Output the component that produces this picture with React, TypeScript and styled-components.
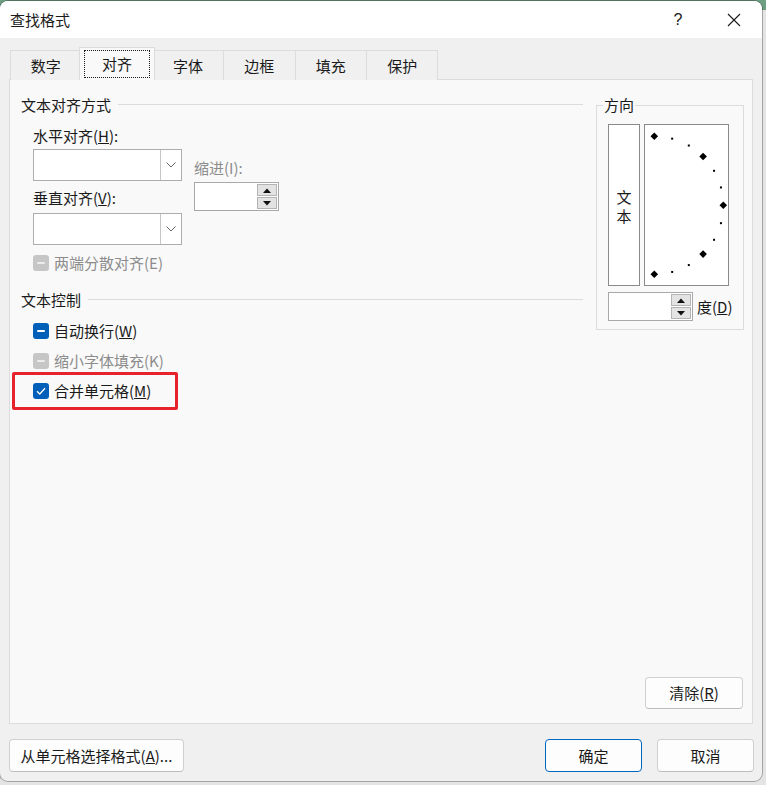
import React from "react";
import styled, { createGlobalStyle, css } from "styled-components";

const FONT = `"Noto Sans CJK SC", "Microsoft YaHei", "Noto Sans", sans-serif`;

const GlobalStyle = createGlobalStyle`
  html, body { margin: 0; padding: 0; }
  body {
    width: 766px;
    height: 785px;
    overflow: hidden;
    background: linear-gradient(#6f9f82 0, #6f9f82 10px, #e4e4e4 10px);
    font-family: ${FONT};
    color: #1a1a1a;
  }
  * { box-sizing: border-box; }
`;

const Dialog = styled.div`
  width: 762px;
  height: 780px;
  margin-top: 1px;
  border-radius: 8px;
  overflow: hidden;
  background: #f0f0f0;
  box-shadow: 0 0 0 1px rgba(0, 0, 0, 0.28);
  display: flex;
  flex-direction: column;
`;

const TitleBar = styled.div`
  height: 37px;
  flex: none;
  background: #ffffff;
  display: flex;
  align-items: center;
  padding-left: 10px;
`;

const Title = styled.div`
  font-size: 15px;
  line-height: 20px;
  flex: 1;
`;

const CaptionButton = styled.div`
  width: 56px;
  height: 37px;
  display: flex;
  align-items: center;
  justify-content: center;
  font-family: "Liberation Sans", sans-serif;
  font-size: 16px;
  color: #1a1a1a;
`;

const TabRow = styled.div`
  display: flex;
  align-items: flex-end;
  height: 32px;
  margin-top: 10px;
  padding-left: 10px;
  position: relative;
  z-index: 2;
  margin-bottom: -1px;
`;

const Tab = styled.div<{ $active?: boolean }>`
  width: 71.4px;
  height: 30px;
  display: flex;
  align-items: center;
  justify-content: center;
  font-size: 15px;
  line-height: 20px;
  background: #f0f0f0;
  border: 1px solid #dcdcdc;
  border-bottom: none;
  border-left: none;
  &:first-child { border-left: 1px solid #dcdcdc; }
  ${(p) =>
    p.$active &&
    css`
      width: 75.4px;
      height: 33px;
      margin: 0 -2px 0 -2px;
      border-left: 1px solid #dcdcdc;
      background: #f9f9f9;
      position: relative;
      z-index: 3;
      padding-bottom: 1px;
    `}
`;

const FocusText = styled.span`
  display: inline-flex;
  align-items: center;
  justify-content: center;
  width: 64px;
  height: 26px;
  outline: 1px dotted #1a1a1a;
  outline-offset: 0;
`;

const Panel = styled.div`
  flex: 1;
  margin: 0 9px;
  background: #f9f9f9;
  border: 1px solid #dcdcdc;
  padding: 15px 8px 14px 11px;
  display: flex;
  flex-direction: column;
  position: relative;
  z-index: 1;
`;

const ContentRow = styled.div`
  display: flex;
  align-items: flex-start;
  gap: 13px;
`;

const LeftColumn = styled.div`
  flex: 1;
  display: flex;
  flex-direction: column;
`;

const GroupHeader = styled.div<{ $mt?: number }>`
  display: flex;
  align-items: center;
  gap: 7px;
  height: 20px;
  margin-top: ${(p) => p.$mt ?? 0}px;
  font-size: 15px;
  line-height: 20px;
  &::after {
    content: "";
    flex: 1;
    height: 1px;
    background: #dcdcdc;
    margin-top: -1px;
  }
`;

const AlignBlock = styled.div`
  display: flex;
  gap: 12px;
  margin: 11px 0 0 12px;
`;

const FieldColumn = styled.div<{ $pt?: number }>`
  display: flex;
  flex-direction: column;
  padding-top: ${(p) => p.$pt ?? 0}px;
`;

const FieldLabel = styled.div<{ $mt?: number; $disabled?: boolean }>`
  height: 20px;
  font-size: 15px;
  line-height: 20px;
  margin-top: ${(p) => p.$mt ?? 0}px;
  color: ${(p) => (p.$disabled ? "#8c8c8c" : "#1a1a1a")};
  white-space: nowrap;
`;

const Combo = styled.div<{ $mt?: number }>`
  width: 149px;
  height: 32px;
  margin-top: ${(p) => p.$mt ?? 0}px;
  background: #ffffff;
  border: 1px solid #adadad;
  display: flex;
  justify-content: flex-end;
`;

const ComboButton = styled.div`
  width: 21px;
  height: 100%;
  border-left: 1px solid #c6c6c6;
  display: flex;
  align-items: center;
  justify-content: center;
`;

const Spin = styled.div<{ $mt?: number }>`
  width: 85px;
  height: 29px;
  margin-top: ${(p) => p.$mt ?? 0}px;
  background: #ffffff;
  border: 1px solid #a8a8a8;
  display: flex;
  justify-content: flex-end;
  padding: 1px;
`;

const SpinButtons = styled.div`
  width: 20px;
  display: flex;
  flex-direction: column;
  gap: 1px;
`;

const SpinButton = styled.div`
  flex: 1;
  background: #e3e3e3;
  border: 1px solid #b4b4b4;
  display: flex;
  align-items: center;
  justify-content: center;
`;

const CheckRow = styled.div<{ $mt?: number; $disabled?: boolean }>`
  display: flex;
  align-items: center;
  gap: 5px;
  height: 20px;
  margin-top: ${(p) => p.$mt ?? 0}px;
  margin-left: 12px;
  font-size: 15px;
  line-height: 20px;
  color: ${(p) => (p.$disabled ? "#8c8c8c" : "#1a1a1a")};
  white-space: nowrap;
`;

const Box = styled.span<{ $disabled?: boolean }>`
  width: 16px;
  height: 16px;
  flex: none;
  border-radius: 3px;
  background: ${(p) => (p.$disabled ? "#c6c6c6" : "#005fb8")};
  display: inline-flex;
  align-items: center;
  justify-content: center;
`;

const Dash = styled.span<{ $disabled?: boolean }>`
  width: 8px;
  height: 2px;
  border-radius: 1px;
  background: ${(p) => (p.$disabled ? "#ececec" : "#ffffff")};
`;

const Highlight = styled.div`
  margin: 1px 0 0 -9px;
  width: 166px;
  height: 38px;
  border: 3px solid #e8222c;
  border-radius: 2px;
  display: flex;
  align-items: center;
  & > ${CheckRow} {
    margin-left: 18px;
  }
`;

const DirectionGroup = styled.fieldset`
  width: 148px;
  margin: 0;
  padding: 0 0 8px 11px;
  border: 1px solid #dcdcdc;
  min-width: 0;
`;

const Legend = styled.legend`
  font-size: 15px;
  line-height: 20px;
  padding: 0 1px;
  margin-left: -5px;
`;

const DirRow = styled.div`
  display: flex;
  gap: 4px;
  margin-top: 9px;
`;

const VerticalText = styled.div`
  width: 32px;
  height: 162px;
  background: #ffffff;
  border: 1px solid #8a8a8a;
  display: flex;
  flex-direction: column;
  align-items: center;
  justify-content: center;
  font-size: 15px;
  line-height: 19px;
  padding-top: 1px;
`;

const Dial = styled.div`
  width: 85px;
  height: 162px;
  background: #ffffff;
  border: 1px solid #8a8a8a;
  display: flex;
`;

const DegreeRow = styled.div`
  display: flex;
  align-items: center;
  gap: 4px;
  margin-top: 6px;
  font-size: 15px;
  line-height: 20px;
`;

const BottomRight = styled.div`
  margin-top: auto;
  display: flex;
  justify-content: flex-end;
  padding-right: 1px;
`;

const Button = styled.button<{ $width: number; $primary?: boolean; $height?: number }>`
  width: ${(p) => p.$width}px;
  height: ${(p) => p.$height ?? 33}px;
  font-family: ${FONT};
  font-size: 15px;
  line-height: 20px;
  color: #1a1a1a;
  background: #fdfdfd;
  border: 1px solid ${(p) => (p.$primary ? "#0067c0" : "#d0d0d0")};
  border-bottom-color: ${(p) => (p.$primary ? "#0067c0" : "#bdbdbd")};
  border-radius: 4px;
  padding: 0;
  display: flex;
  align-items: center;
  justify-content: center;
  white-space: nowrap;
`;

const Footer = styled.div`
  display: flex;
  align-items: center;
  padding: 15px 8px 9px 9px;
  gap: 15px;
  & > :first-child {
    margin-right: auto;
  }
`;

const Chevron = () => (
  <svg width="10" height="6" viewBox="0 0 10 6">
    <path d="M0.5 0.5 L5 5 L9.5 0.5" fill="none" stroke="#6a6a6a" strokeWidth="1" />
  </svg>
);

const Tri = ({ up }: { up?: boolean }) => (
  <svg width="8" height="5" viewBox="0 0 8 5">
    <path d={up ? "M0 5 L4 0.5 L8 5 Z" : "M0 0 L8 0 L4 4.5 Z"} fill="#111" />
  </svg>
);

const SpinBox = ({ mt }: { mt?: number }) => (
  <Spin $mt={mt}>
    <SpinButtons>
      <SpinButton>
        <Tri up />
      </SpinButton>
      <SpinButton>
        <Tri />
      </SpinButton>
    </SpinButtons>
  </Spin>
);

const DialDrawing = () => {
  const cx = 9.3;
  const cy = 80.3;
  const r = 69;
  const marks: React.ReactNode[] = [];
  for (let a = 0; a <= 180; a += 15) {
    const rad = (a * Math.PI) / 180;
    const x = cx + r * Math.sin(rad);
    const y = cy - r * Math.cos(rad);
    if (a % 45 === 0) {
      marks.push(
        <polygon
          key={a}
          points={`${x},${y - 3.8} ${x + 3.8},${y} ${x},${y + 3.8} ${x - 3.8},${y}`}
          fill="#000"
        />
      );
    } else {
      marks.push(<rect key={a} x={x - 1} y={y - 1} width="2" height="2" fill="#000" />);
    }
  }
  return (
    <svg width="83" height="160" viewBox="0 0 83 160">
      {marks}
    </svg>
  );
};

export default function App() {
  return (
    <>
      <GlobalStyle />
      <Dialog>
        <TitleBar>
          <Title>查找格式</Title>
          <CaptionButton>?</CaptionButton>
          <CaptionButton>
            <svg width="14" height="14" viewBox="0 0 14 14">
              <path d="M1 1 L13 13 M13 1 L1 13" stroke="#1a1a1a" strokeWidth="1.1" />
            </svg>
          </CaptionButton>
        </TitleBar>

        <TabRow>
          <Tab>数字</Tab>
          <Tab $active>
            <FocusText>对齐</FocusText>
          </Tab>
          <Tab>字体</Tab>
          <Tab>边框</Tab>
          <Tab>填充</Tab>
          <Tab>保护</Tab>
        </TabRow>

        <Panel>
          <ContentRow>
            <LeftColumn>
              <GroupHeader>文本对齐方式</GroupHeader>
              <AlignBlock>
                <FieldColumn>
                  <FieldLabel>
                    水平对齐(<u>H</u>):
                  </FieldLabel>
                  <Combo $mt={3}>
                    <ComboButton>
                      <Chevron />
                    </ComboButton>
                  </Combo>
                  <FieldLabel $mt={7}>
                    垂直对齐(<u>V</u>):
                  </FieldLabel>
                  <Combo $mt={5}>
                    <ComboButton>
                      <Chevron />
                    </ComboButton>
                  </Combo>
                </FieldColumn>
                <FieldColumn $pt={32}>
                  <FieldLabel $disabled>缩进(I):</FieldLabel>
                  <SpinBox mt={4} />
                </FieldColumn>
              </AlignBlock>
              <CheckRow $mt={8} $disabled>
                <Box $disabled>
                  <Dash $disabled />
                </Box>
                两端分散对齐(E)
              </CheckRow>

              <GroupHeader $mt={17}>文本控制</GroupHeader>
              <CheckRow $mt={11}>
                <Box>
                  <Dash />
                </Box>
                <span>
                  自动换行(<u>W</u>)
                </span>
              </CheckRow>
              <CheckRow $mt={10} $disabled>
                <Box $disabled>
                  <Dash $disabled />
                </Box>
                缩小字体填充(K)
              </CheckRow>
              <Highlight>
                <CheckRow>
                  <Box>
                    <svg width="10" height="8" viewBox="0 0 10 8">
                      <path d="M1 4.2 L3.8 7 L9 1.2" fill="none" stroke="#fff" strokeWidth="1.3" />
                    </svg>
                  </Box>
                  <span>
                    合并单元格(<u>M</u>)
                  </span>
                </CheckRow>
              </Highlight>
            </LeftColumn>

            <DirectionGroup>
              <Legend>方向</Legend>
              <DirRow>
                <VerticalText>
                  <span>文</span>
                  <span>本</span>
                </VerticalText>
                <Dial>
                  <DialDrawing />
                </Dial>
              </DirRow>
              <DegreeRow>
                <SpinBox />
                <span>
                  度(<u>D</u>)
                </span>
              </DegreeRow>
            </DirectionGroup>
          </ContentRow>

          <BottomRight>
            <Button $width={98} $height={32}>
              清除(<u>R</u>)
            </Button>
          </BottomRight>
        </Panel>

        <Footer>
          <Button $width={175}>
            从单元格选择格式(<u>A</u>)...
          </Button>
          <Button $width={97} $primary>
            确定
          </Button>
          <Button $width={97}>取消</Button>
        </Footer>
      </Dialog>
    </>
  );
}
